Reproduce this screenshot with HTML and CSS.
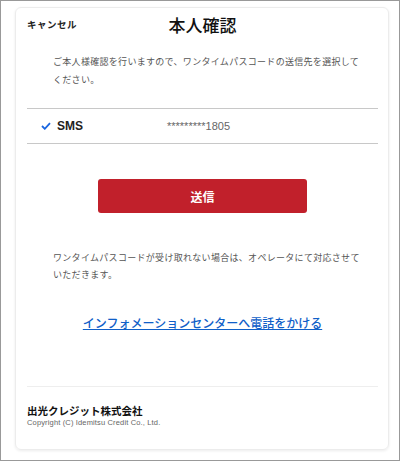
FILE: index.html
```html
<!DOCTYPE html>
<html lang="ja">
<head>
  <meta charset="UTF-8">
  <meta name="viewport" content="width=400, initial-scale=1.0">
  <title>本人確認</title>
  <link rel="stylesheet" href="styles.css">
</head>
<body>
  <div class="frame">
    <div class="card">
      <div class="header">
        <a href="#" class="cancel">キャンセル</a>
        <h2>本人確認</h2>
      </div>
      <p class="note">ご本人様確認を行いますので、ワンタイムパスコードの送信先を選択してください。</p>
      <div class="option">
        <svg class="check" width="10" height="8" viewBox="0 0 10 8">
          <path d="M1 4 L3.8 6.8 L9 1.2" fill="none" stroke="#1a66e0" stroke-width="1.8"/>
        </svg>
        <span class="opt-name">SMS</span>
        <span class="opt-num">*********1805</span>
      </div>
      <div class="button-row">
        <button class="send">送信</button>
      </div>
      <p class="note note2">ワンタイムパスコードが受け取れない場合は、オペレータにて対応させていただきます。</p>
      <div class="link-row">
        <a href="#" class="tel">インフォメーションセンターへ電話をかける</a>
      </div>
      <div class="footer">
        <div class="company">出光クレジット株式会社</div>
        <div class="copy">Copyright (C) Idemitsu Credit Co., Ltd.</div>
      </div>
    </div>
  </div>
</body>
</html>
```
FILE: styles.css
```css
html, body {
  margin: 0;
  padding: 0;
}
body {
  font-family: "Noto Sans CJK JP", "Liberation Sans", sans-serif;
  background: #fff;
}
.frame {
  width: 400px;
  height: 461px;
  box-sizing: border-box;
  border: 1px solid #999;
  padding: 6px 10px 10px 14px;
}
.card {
  height: 100%;
  box-sizing: border-box;
  border: 1px solid #ececec;
  border-radius: 6px;
  box-shadow: 0 1px 3px rgba(0,0,0,0.08);
  padding: 5px 10px 0 11px;
  position: relative;
}
.header {
  position: relative;
  height: 24px;
}
.cancel {
  position: absolute;
  left: 0;
  top: 4px;
  font-size: 9.5px;
  font-weight: bold;
  color: #222;
  text-decoration: none;
  letter-spacing: 0.5px;
}
h2 {
  margin: 0;
  text-align: center;
  font-size: 17px;
  line-height: 24px;
  font-weight: 500;
  color: #111;
}
.note {
  margin: 16px 0 0;
  padding: 0 18px 0 26px;
  font-size: 9px;
  line-height: 18px;
  letter-spacing: 0.3px;
  color: #555;
}
.option {
  margin-top: 19px;
  border-top: 1.5px solid #c8c8c8;
  border-bottom: 1.5px solid #c8c8c8;
  height: 34px;
  display: flex;
  align-items: center;
}
.check {
  margin-left: 14px;
}
.opt-name {
  margin-left: 6px;
  width: 110px;
  font-family: "Liberation Sans", sans-serif;
  font-size: 12px;
  font-weight: bold;
  color: #222;
}
.opt-num {
  font-family: "Liberation Sans", sans-serif;
  font-size: 11px;
  color: #666;
}
.button-row {
  margin-top: 35px;
  text-align: center;
}
.send {
  width: 209px;
  height: 34px;
  border: none;
  border-radius: 3px;
  background: #c1202b;
  color: #fff;
  font-family: inherit;
  font-size: 12px;
  font-weight: bold;
}
.note2 {
  margin-top: 36px;
  line-height: 17px;
}
.link-row {
  margin-top: 29px;
  text-align: center;
  line-height: 18px;
}
.tel {
  font-size: 12px;
  font-weight: 500;
  color: #1060c8;
  text-decoration: underline;
}
.footer {
  margin-top: 54px;
  border-top: 1px solid #eee;
  padding-top: 17px;
}
.company {
  font-size: 10.5px;
  font-weight: bold;
  line-height: 14px;
  color: #111;
}
.copy {
  font-family: "Liberation Sans", sans-serif;
  font-size: 7.5px;
  letter-spacing: 0.15px;
  line-height: 9px;
  color: #666;
}
```
